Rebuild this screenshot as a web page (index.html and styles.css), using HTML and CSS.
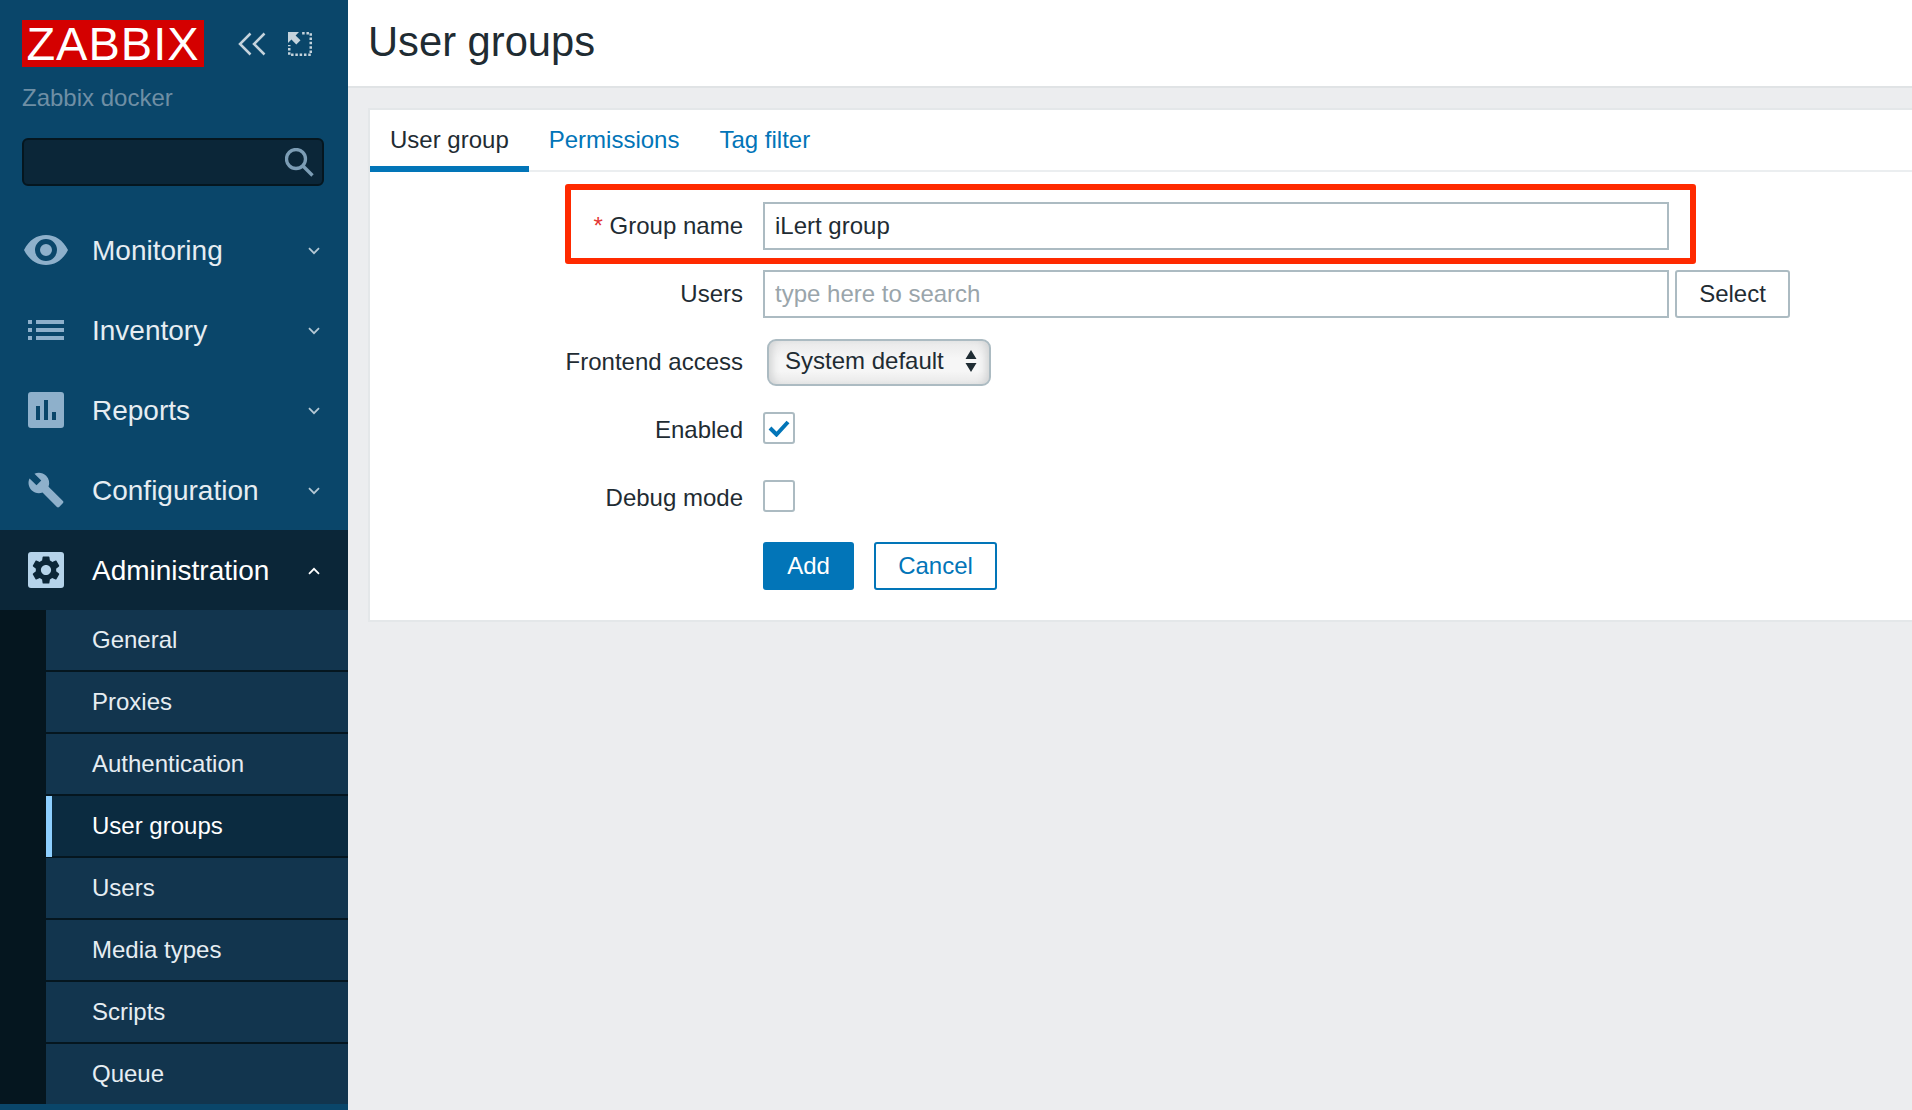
FILE: index.html
```html
<!DOCTYPE html>
<html lang="en">
<head>
    <meta charset="UTF-8">
    <meta name="viewport" content="width=device-width, initial-scale=1.0">
    <title>User groups</title>
    <link rel="stylesheet" href="styles.css">
</head>
<body>
    <aside class="sidebar">
        <div class="brand">
            <div class="logo">ZABBIX</div>
            <svg class="collapse-icon" viewBox="0 0 28 24"><path d="M12.5 1.5 2 12l10.5 10.5M26.5 1.5 16 12l10.5 10.5"/></svg>
            <svg class="expand-icon" viewBox="0 0 24 24">
                <rect class="dots" x="1.250" y="1.250" width="21.500" height="21.500"/>
                <rect class="cutout" x="0" y="0" width="14" height="13"/>
                <path class="arrow" d="M0 0h11L7.600 3.400 12.500 8.300 8.300 12.500 3.400 7.600 0 11z"/>
            </svg>
        </div>
        <div class="server-name">Zabbix docker</div>
        <div class="search-box">
            <svg class="search-icon" viewBox="0 0 29 29"><circle cx="11" cy="11" r="9.500"/><path d="M18 18 27.500 27.500"/></svg>
        </div>

        <nav class="menu">
            <a class="menu-item">
                <span class="menu-icon">
                    <svg width="44" height="30" viewBox="0 0 44 30"><path fill-rule="evenodd" d="M0 15C5 5 13 0 22 0s17 5 22 15c-5 10-13 15-22 15S5 25 0 15zm22 11a11 11 0 1 0 0-22 11 11 0 0 0 0 22zm0-5a6 6 0 1 1 0-12 6 6 0 0 1 0 12z"/></svg>
                </span>
                Monitoring
                <svg class="chevron" viewBox="0 0 12 8"><path d="M1 1.2 6 6.2l5-5"/></svg>
            </a>
            <a class="menu-item">
                <span class="menu-icon">
                    <svg width="36" height="20" viewBox="0 0 36 20"><path d="M0 0h4v4H0zM8 0h28v4H8zM0 8h4v4H0zM8 8h28v4H8zM0 16h4v4H0zM8 16h28v4H8z"/></svg>
                </span>
                Inventory
                <svg class="chevron" viewBox="0 0 12 8"><path d="M1 1.2 6 6.2l5-5"/></svg>
            </a>
            <a class="menu-item">
                <span class="menu-icon">
                    <svg width="36" height="36" viewBox="0 0 36 36"><path fill-rule="evenodd" d="M3 0h30a3 3 0 0 1 3 3v30a3 3 0 0 1-3 3H3a3 3 0 0 1-3-3V3a3 3 0 0 1 3-3zm5 14v14h4V14zm8-6v20h4V8zm8 12v8h4v-8z"/></svg>
                </span>
                Reports
                <svg class="chevron" viewBox="0 0 12 8"><path d="M1 1.2 6 6.2l5-5"/></svg>
            </a>
            <a class="menu-item">
                <span class="menu-icon">
                    <svg width="38" height="38" viewBox="0 0 24 24"><path d="M22.7 19l-9.1-9.1c.9-2.3.4-5-1.5-6.9-2-2-5-2.4-7.4-1.3L9 6 6 9 1.6 4.7C.4 7.1.9 10.1 2.9 12.1c1.9 1.9 4.6 2.4 6.9 1.5l9.1 9.1c.4.4 1 .4 1.4 0l2.3-2.3c.5-.4.5-1.1.1-1.4z"/></svg>
                </span>
                Configuration
                <svg class="chevron" viewBox="0 0 12 8"><path d="M1 1.2 6 6.2l5-5"/></svg>
            </a>
            <a class="menu-item open">
                <span class="menu-icon">
                    <span class="gear-tile">
                        <svg width="34" height="34" viewBox="0 0 24 24"><path d="M19.14 12.94c.04-.3.06-.61.06-.94 0-.32-.02-.64-.07-.94l2.03-1.58c.18-.14.23-.41.12-.61l-1.92-3.32c-.12-.22-.37-.29-.59-.22l-2.39.96c-.5-.38-1.03-.7-1.62-.94l-.36-2.54c-.04-.24-.24-.41-.48-.41h-3.84c-.24 0-.43.17-.47.41l-.36 2.54c-.59.24-1.13.57-1.62.94l-2.39-.96c-.22-.08-.47 0-.59.22L2.74 8.87c-.12.21-.08.47.12.61l2.03 1.58c-.05.3-.09.63-.09.94s.02.64.07.94l-2.03 1.58c-.18.14-.23.41-.12.61l1.92 3.32c.12.22.37.29.59.22l2.39-.96c.5.38 1.03.7 1.62.94l.36 2.54c.05.24.24.41.48.41h3.84c.24 0 .44-.17.47-.41l.36-2.54c.59-.24 1.13-.56 1.62-.94l2.39.96c.22.08.47 0 .59-.22l1.92-3.32c.12-.22.07-.47-.12-.61l-2.01-1.58zM12 15.6c-1.98 0-3.6-1.62-3.6-3.6s1.62-3.6 3.6-3.6 3.6 1.62 3.6 3.6-1.62 3.6-3.6 3.6z"/></svg>
                    </span>
                </span>
                Administration
                <svg class="chevron" viewBox="0 0 12 8"><path d="M1 6.8 6 1.8l5 5"/></svg>
            </a>
            <ul class="submenu">
                <li>General</li>
                <li>Proxies</li>
                <li>Authentication</li>
                <li class="selected">User groups</li>
                <li>Users</li>
                <li>Media types</li>
                <li>Scripts</li>
                <li>Queue</li>
            </ul>
        </nav>
    </aside>

    <main class="main">
        <header class="page-header">
            <h1>User groups</h1>
        </header>

        <section class="card">
            <div class="tabs">
                <a class="tab active">User group</a>
                <a class="tab">Permissions</a>
                <a class="tab">Tag filter</a>
            </div>

            <form class="form">
                <div class="row">
                    <label class="field-label" for="group-name"><span class="required">*</span> Group name</label>
                    <input class="text-input" type="text" id="group-name" value="iLert group">
                    <div class="highlight"></div>
                </div>
                <div class="row">
                    <label class="field-label" for="users">Users</label>
                    <input class="text-input" type="text" id="users" placeholder="type here to search">
                    <button class="btn-plain" type="button">Select</button>
                </div>
                <div class="row">
                    <span class="field-label">Frontend access</span>
                    <div class="select-box">
                        System default
                        <svg class="select-arrows" width="12" height="22" viewBox="0 0 12 22"><path d="M6 0l5.500 9H.5zM6 22 .5 13h11z"/></svg>
                    </div>
                </div>
                <div class="row">
                    <span class="field-label">Enabled</span>
                    <span class="checkbox">
                        <svg width="22" height="18" viewBox="0 0 22 18"><path d="M2 9l6.500 6.500L20 3"/></svg>
                    </span>
                </div>
                <div class="row">
                    <span class="field-label">Debug mode</span>
                    <span class="checkbox"></span>
                </div>
                <div class="row">
                    <span class="field-label"></span>
                    <button class="btn-primary" type="button">Add</button>
                    <button class="btn-outline" type="button">Cancel</button>
                </div>
            </form>
        </section>
    </main>
</body>
</html>
```

FILE: styles.css
```css
* {
    box-sizing: border-box;
}

body {
    margin: 0;
    display: flex;
    height: 100vh;
    overflow: hidden;
    font-family: "Liberation Sans", Arial, sans-serif;
    font-size: 24px;
    color: #1f2c33;
    background-color: #ecedef;
}

/* sidebar */
.sidebar {
    flex: 0 0 348px;
    background-color: #0a466a;
    overflow: hidden;
}

.brand {
    display: flex;
    align-items: center;
    padding: 20px 0 0 22px;
}

.logo {
    width: 182px;
    height: 47px;
    background-color: #d40000;
    color: #fff;
    font-size: 47px;
    letter-spacing: 1px;
    line-height: 47px;
    text-align: center;
}

.collapse-icon {
    width: 28px;
    height: 24px;
    margin-left: 34px;
    fill: none;
    stroke: #c5d3dc;
    stroke-width: 2.500;
}

.expand-icon {
    width: 24px;
    height: 24px;
    margin-left: 22px;
}

.expand-icon .dots {
    fill: none;
    stroke: #c5d3dc;
    stroke-width: 2.500;
    stroke-dasharray: 2.500 1.800;
}

.expand-icon .cutout {
    fill: #0a466a;
}

.expand-icon .arrow {
    fill: #c5d3dc;
}

.server-name {
    margin: 17px 0 0 22px;
    line-height: 28px;
    color: #6f8fa5;
}

.search-box {
    display: flex;
    align-items: center;
    justify-content: flex-end;
    width: 302px;
    height: 48px;
    margin: 26px 0 24px 22px;
    padding-right: 8px;
    background-color: #0b2638;
    border: 2px solid #05161f;
    border-radius: 6px;
}

.search-icon {
    width: 29px;
    height: 29px;
    fill: none;
    stroke: #7c9db5;
    stroke-width: 3.300;
}

.menu-item {
    display: flex;
    align-items: center;
    height: 80px;
    padding: 2px 0 0 24px;
    font-size: 28px;
    color: #e6edf2;
}

.menu-item.open {
    background-color: #0b2638;
    color: #fff;
}

.menu-icon {
    display: flex;
    justify-content: center;
    width: 44px;
    margin: -2px 24px 0 0;
    fill: #8eb0cb;
}

.gear-tile {
    display: flex;
    align-items: center;
    justify-content: center;
    width: 36px;
    height: 36px;
    background-color: #b5d3ea;
    border-radius: 3px;
    fill: #0b2638;
}

.chevron {
    width: 12px;
    height: 8px;
    margin-left: auto;
    margin-right: 28px;
    fill: none;
    stroke: #b5c8d5;
    stroke-width: 1.800;
}

.menu-item.open .chevron {
    stroke: #fff;
}

.submenu {
    margin: 0;
    padding: 0 0 0 46px;
    list-style: none;
    background-color: #05161f;
}

.submenu li {
    height: 62px;
    padding: 0 0 2px 46px;
    line-height: 60px;
    color: #e6edf2;
    background: linear-gradient(#12354e, #12354e) no-repeat 0 0 / 100% 60px;
}

.submenu li.selected {
    padding-left: 40px;
    color: #fff;
    background-image: linear-gradient(#0b2b40, #0b2b40);
    border-left: 6px solid #8dcfff;
    border-image: linear-gradient(#8dcfff 60px, #05161f 60px) 1;
}

.submenu li:last-child {
    height: 60px;
    padding-bottom: 0;
}

/* main */
.main {
    flex: 1;
    min-width: 0;
}

.page-header {
    height: 88px;
    padding-left: 20px;
    background-color: #fff;
    border-bottom: 2px solid #e0e3e5;
}

.page-header h1 {
    margin: 0;
    font-size: 41.7px;
    font-weight: normal;
    line-height: 84px;
}

.card {
    margin: 20px 0 0 20px;
    background-color: #fff;
    border: 2px solid #e4e7e9;
    border-right: none;
}

.tabs {
    display: flex;
    height: 62px;
    border-bottom: 2px solid #ebeef0;
}

.tab {
    height: 62px;
    padding: 0 20px;
    line-height: 60px;
    color: #0275b8;
}

.tab.active {
    color: #1f2c33;
    border-bottom: 6px solid #0275b8;
}

.form {
    display: flex;
    flex-direction: column;
    gap: 20px;
    padding: 30px 0;
}

.row {
    position: relative;
    display: flex;
    align-items: center;
    height: 48px;
}

.field-label {
    flex: 0 0 373px;
    margin-right: 20px;
    text-align: right;
}

.required {
    color: #e33734;
}

.text-input {
    width: 906px;
    height: 48px;
    padding: 0 10px;
    font: inherit;
    color: inherit;
    background-color: #fff;
    border: 2px solid #acbbc2;
    border-radius: 0;
    outline: none;
}

.text-input::placeholder {
    color: #9aa5ab;
    opacity: 1;
}

/* red box drawn over the screenshot */
.highlight {
    position: absolute;
    left: 195px;
    top: -18px;
    width: 1131px;
    height: 80px;
    border: 6px solid #ff2a00;
    border-radius: 3px;
}

.btn-plain {
    width: 115px;
    height: 48px;
    margin-left: 6px;
    font: inherit;
    color: inherit;
    background-color: #fff;
    border: 2px solid #acbbc2;
    border-radius: 3px;
}

.select-box {
    display: flex;
    align-items: center;
    justify-content: space-between;
    width: 224px;
    height: 47px;
    margin-left: 4px;
    padding: 0 12px 2px 16px;
    background: linear-gradient(#e9e9e9, #f6f6f6 40%, #f6f6f6 70%, #e8e8e8);
    box-shadow: inset 8px 0 8px -5px #cfd1d2, inset -8px 0 8px -5px #cfd1d2;
    border: 2px solid #acbbc2;
    border-radius: 9px;
}

.select-arrows {
    fill: #1f2c33;
}

.checkbox {
    display: flex;
    align-items: center;
    justify-content: center;
    width: 32px;
    height: 32px;
    margin-bottom: 4px;
    background-color: #fff;
    border: 2px solid #acbbc2;
    border-radius: 3px;
}

.checkbox svg {
    fill: none;
    stroke: #0275b8;
    stroke-width: 4;
}

.btn-primary {
    width: 91px;
    height: 48px;
    font: inherit;
    color: #fff;
    background-color: #0275b8;
    border: none;
    border-radius: 3px;
}

.btn-outline {
    width: 123px;
    height: 48px;
    margin-left: 20px;
    font: inherit;
    color: #0275b8;
    background-color: #fff;
    border: 2px solid #0275b8;
    border-radius: 3px;
}
```
